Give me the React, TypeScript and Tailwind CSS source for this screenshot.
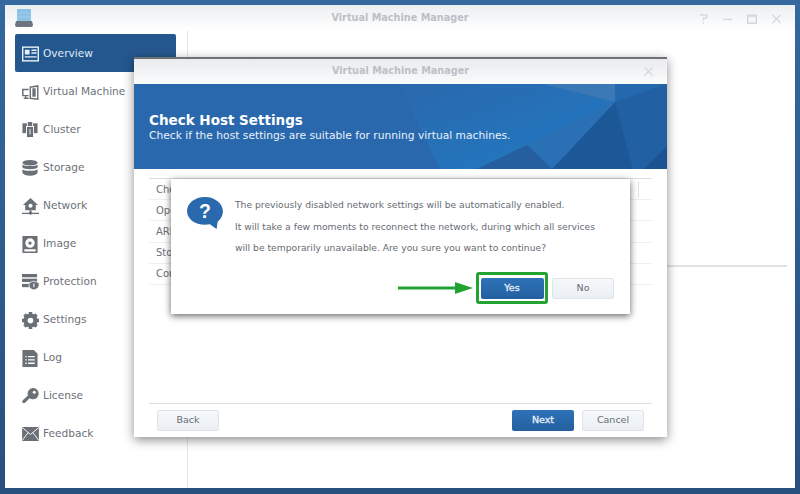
import React from "react";

const G = "#6b6f76";

const icons: Record<string, React.ReactNode> = {
  overview: (
    <svg viewBox="0 0 18 16" className="w-[17px] h-[16px]">
      <rect x="0.75" y="0.75" width="16.5" height="14.5" fill="none" stroke="#e8f0f8" strokeWidth="1.5" />
      <rect x="3" y="3.500" width="5" height="5" fill="#e8f0f8" />
      <path d="M10 4h5.500M10 7h5.500M3 11h12.500" stroke="#e8f0f8" strokeWidth="1.5" />
    </svg>
  ),
  vm: (
    <svg viewBox="0 0 18 16" className="w-[17px] h-[15px]" fill={G}>
      <path d="M0 4h7v1.600H1.600v5H7V12H4.500v1.400H7V15H1.800v-1.600h1.400V12H0z" />
      <path d="M8 1.500 17.500 0v16L8 15zM9.500 3v10.600l6.500.6V2z" />
      <rect x="11" y="3.500" width="3.500" height="9" />
    </svg>
  ),
  cluster: (
    <svg viewBox="0 0 18 18" className="w-[16px] h-[16px]" fill={G}>
      <rect x="0.5" y="1.500" width="5" height="11" />
      <rect x="12.5" y="1.500" width="5" height="11" />
      <rect x="6.5" y="0" width="5" height="6" />
      <rect x="5" y="5" width="8" height="12.500" stroke="#fff" strokeWidth="1" />
      <path d="M9 8v6" stroke="#fff" />
    </svg>
  ),
  storage: (
    <svg viewBox="0 0 16 16" className="w-[16px] h-[16px]" fill={G}>
      <ellipse cx="8" cy="2.800" rx="7.600" ry="2.800" />
      <path d="M.4 4.600C2 6.600 14 6.600 15.600 4.600v3C14 9.800 2 9.800.4 7.600zM.4 9.200c1.600 2.100 13.600 2.100 15.200 0v3.600C14 16.600 2 16.600.4 12.800z" />
    </svg>
  ),
  network: (
    <svg viewBox="0 0 18 18" className="w-[17px] h-[17px]" fill={G}>
      <path d="M9 0 17 7.500h-2.400V13H3.400V7.500H1zM9 6a2.200 2.200 0 1 0 0 4.400A2.200 2.200 0 0 0 9 6z" fillRule="evenodd" />
      <rect x="8" y="13" width="2" height="3" />
      <rect x="0" y="15.600" width="18" height="1.400" />
      <circle cx="9" cy="16" r="1.800" />
    </svg>
  ),
  image: (
    <svg viewBox="0 0 16 18" className="w-[16px] h-[17px]">
      <rect width="16" height="18" fill={G} />
      <circle cx="8" cy="7.500" r="5" fill="#fff" />
      <circle cx="8" cy="7.500" r="1.800" fill={G} />
      <rect x="2" y="14" width="12" height="2.400" fill="#fff" />
    </svg>
  ),
  protection: (
    <svg viewBox="0 0 18 17" className="w-[17px] h-[16px]" fill={G}>
      <rect x="0" y="0" width="16" height="3.500" />
      <rect x="0" y="5" width="16" height="3.500" />
      <rect x="0" y="10.500" width="8" height="3.500" />
      <path d="M12.500 7.500 18 9.200v3.400c0 2-2.500 3.600-5.500 4.400-3-.8-5-2.400-5-4.400V9.200z" stroke="#fff" strokeWidth="0.8" />
      <rect x="12" y="10" width="1.200" height="4" fill="#fff" />
    </svg>
  ),
  settings: (
    <svg viewBox="0 0 24 24" className="w-[17px] h-[17px]">
      <circle cx="12" cy="12" r="7" fill="none" stroke={G} strokeWidth="6" />
      <path d="M12 0v5M12 19v5M0 12h5M19 12h5M3.500 3.500 7 7M17 17l3.500 3.500M3.500 20.500 7 17M17 7l3.500-3.500" stroke={G} strokeWidth="5" />
    </svg>
  ),
  log: (
    <svg viewBox="0 0 16 18" className="w-[16px] h-[17px]">
      <path d="M0 0h12l4 4v14H0z" fill={G} />
      <path d="M6 7h7M6 10.500h7M6 14h7M3 7h1.500M3 10.500h1.500M3 14h1.500" stroke="#fff" strokeWidth="1.400" />
    </svg>
  ),
  license: (
    <svg viewBox="0 0 18 18" className="w-[17px] h-[17px]">
      <path d="M11.500 0A6 6 0 1 1 8 10.800L3 16H0.500v-2.800L6.300 8A6 6 0 0 1 11.500 0z" fill={G} />
      <circle cx="13" cy="4.600" r="1.600" fill="#fff" />
    </svg>
  ),
  feedback: (
    <svg viewBox="0 0 18 15" className="w-[17px] h-[14px]">
      <rect width="18" height="15" fill={G} />
      <path d="M0 0.500 9 8l9-7.500M0 14.500 6.500 6M18 14.500 11.500 6" fill="none" stroke="#fff" strokeWidth="1" />
    </svg>
  ),
};

const nav: [string, string][] = [
  ["overview", "Overview"],
  ["vm", "Virtual Machine"],
  ["cluster", "Cluster"],
  ["storage", "Storage"],
  ["network", "Network"],
  ["image", "Image"],
  ["protection", "Protection"],
  ["settings", "Settings"],
  ["log", "Log"],
  ["license", "License"],
  ["feedback", "Feedback"],
];

function GrayBtn({ children, w }: { children: React.ReactNode; w: string }) {
  return (
    <div className={`${w} h-[21px] flex items-center justify-center rounded-[2px] border border-[#e0e4e9] bg-gradient-to-b from-[#f6f8fb] to-[#ebeff3] text-[#666c73] text-[9.5px]`}>
      {children}
    </div>
  );
}

function BlueBtn({ children, w }: { children: React.ReactNode; w: string }) {
  return (
    <div className={`${w} h-[21px] flex items-center justify-center rounded-[2px] bg-gradient-to-b from-[#2e72b8] to-[#24609f] text-[#e6f0f8] text-[9.5px] [-webkit-text-stroke:0.3px_#e6f0f8]`}>
      {children}
    </div>
  );
}

export default function App() {
  return (
    <div
      className="relative w-[800px] h-[494px] overflow-hidden bg-gradient-to-b from-[#34689f] to-[#28507f] pl-[5px] pt-[5px]"
      style={{ fontFamily: '"DejaVu Sans", Verdana, sans-serif' }}
    >
      {/* main window */}
      <div className="relative flex flex-col w-[790px] h-[483px] bg-white">
        <div className="relative flex h-[26px] shrink-0 items-center justify-center bg-gradient-to-b from-[#eceef1] to-white">
          <div className="absolute left-[10px] top-[4px]">
            <svg viewBox="0 0 18 18" className="w-[18px] h-[18px]">
              <rect x="2" y="0" width="14" height="12" fill="#8cc1e6" />
              <path d="M2 4h14M2 8h14" stroke="#a9d3ee" strokeWidth="0.7" />
              <path d="M1 12h16l1 4a2 2 0 0 1-2 2H2a2 2 0 0 1-2-2z" fill="#6d7680" />
            </svg>
          </div>
          <span className="text-[9.7px] font-bold text-[#bcc0c5]">Virtual Machine Manager</span>
          <div className="absolute right-[14px] top-[8px] flex items-center gap-[15px]">
            <svg viewBox="0 0 10 11" className="w-[9px] h-[11px]"><path d="M1 1.500h7.500v3.500H5v2.500M5 9v2" fill="none" stroke="#d2d5d9" strokeWidth="1.300" /></svg>
            <svg viewBox="0 0 10 10" className="w-[9px] h-[10px]"><path d="M0 5.500h10" stroke="#d2d5d9" strokeWidth="1.400" /></svg>
            <svg viewBox="0 0 10 10" className="w-[10px] h-[10px]"><path d="M.7 2v7.300h8.600V2zM0 1.200h10" fill="none" stroke="#d2d5d9" strokeWidth="1.400" /></svg>
            <svg viewBox="0 0 10 10" className="w-[9px] h-[10px]"><path d="m.5.5 9 9M9.500.5l-9 9" stroke="#d2d5d9" strokeWidth="1.300" /></svg>
          </div>
        </div>
        <div className="flex flex-1 min-h-0">
          <div className="flex flex-col w-[183px] shrink-0 border-r border-[#e3e5e8] pt-[3px] pl-[10px] pr-[11px]">
            {nav.map(([k, label], i) => (
              <div
                key={k}
                className={`flex items-center h-[38px] shrink-0 pl-[6px] pt-[2px] rounded-[2px] text-[10.6px] ${i === 0 ? "bg-[#25578f] text-[#dfeaf4]" : "text-[#6c7178]"}`}
              >
                <span className="w-[18px] flex justify-center shrink-0">{icons[k]}</span>
                <span className="ml-[4px]">{label}</span>
              </div>
            ))}
          </div>
          <div className="flex-1 flex flex-col items-end pt-[234px] pr-[8px]">
            <div className="w-[120px] h-[2px] bg-[#e0e2e5]" />
          </div>
        </div>
      </div>

      {/* wizard dialog */}
      <div className="absolute left-[134px] top-[57px] w-[533px] h-[380px] flex flex-col bg-white border-t-2 border-[#6f7173] shadow-[0_3px_10px_rgba(0,0,0,0.45)]">
        <div className="relative h-[25px] shrink-0 flex items-center justify-center bg-gradient-to-b from-[#e9ebee] to-[#fafbfb]">
          <span className="text-[9.7px] font-bold text-[#bcc0c5]">Virtual Machine Manager</span>
          <svg viewBox="0 0 10 10" className="absolute right-[14px] top-[8px] w-[9px] h-[9px]"><path d="m.5.5 9 9M9.500.5l-9 9" stroke="#cfd3d7" strokeWidth="1.200" /></svg>
        </div>
        <div className="relative h-[85px] shrink-0 bg-[#2a68ad] overflow-hidden">
          <svg viewBox="0 0 533 85" className="absolute inset-0 w-[533px] h-[85px]">
            <defs>
              <linearGradient id="bright" x1="0.1" y1="0" x2="0.85" y2="0.75">
                <stop offset="0" stopColor="#2a69ae" />
                <stop offset="1" stopColor="#2277bf" />
              </linearGradient>
            </defs>
            <polygon points="265,0 409,0 481,18 393,61 343,85 306,85" fill="url(#bright)" />
            <polygon points="409,0 481,0 481,18" fill="#3b79b6" />
            <polygon points="481,0 533,0 481,18" fill="#2468ad" />
            <polygon points="481,18 533,0 533,85 499,85" fill="#2060a3" />
            <polygon points="481,18 499,85 418,85" fill="#1c5797" />
            <polygon points="481,18 418,85 393,61" fill="#2a70b5" />
            <polygon points="393,61 418,85 343,85" fill="#255f9f" />
            <polygon points="510,85 533,62 533,85" fill="#1b5392" />
          </svg>
          <div className="absolute left-[15px] top-[28px] text-white">
            <div className="text-[13.5px] font-bold leading-[17px]">Check Host Settings</div>
            <div className="text-[10.7px] leading-[14px] text-[#e8f2fa]">Check if the host settings are suitable for running virtual machines.</div>
          </div>
        </div>
        <div className="flex-1 px-[15px] pt-[9px] flex flex-col min-h-0">
          <div className="border-t border-[#dcdee0]">
            {["Che", "Ope", "ARP", "Sto", "Cor"].map((t, i) => (
              <div key={t} className="flex items-center h-[21.2px] pl-[7px] border-b border-[#eeeff0] text-[10px] text-[#6c7178]">
                <span>{t}</span>
                {i === 0 && <span className="ml-auto mr-[13px] w-px h-[17px] bg-[#e0e2e4]" />}
              </div>
            ))}
          </div>
          <div className="mt-auto border-t border-[#dcdee0] pt-[6px] pb-[6px] pl-[8px] pr-[8px] flex items-center">
            <GrayBtn w="w-[62px]">Back</GrayBtn>
            <div className="ml-auto flex gap-[8px]">
              <BlueBtn w="w-[62px]">Next</BlueBtn>
              <GrayBtn w="w-[62px]">Cancel</GrayBtn>
            </div>
          </div>
        </div>
      </div>

      {/* confirmation box */}
      <div className="absolute left-[171px] top-[179px] w-[459px] h-[135px] bg-white shadow-[0_2px_7px_rgba(0,0,0,0.6)] flex pl-[15px] pt-[18px]">
        <svg viewBox="0 0 38 34" className="w-[38px] h-[33px] shrink-0">
          <path d="M19 0C29 0 37.500 6.500 37.500 15c0 4.500-2.500 8-5.500 10.500L31 33l-7-4.800c-1.500.3-3.300.5-5 .5C8.500 28.700.5 22.700.5 14.500.5 6.500 8.500 0 19 0z" fill="#2a69ad" />
          <text x="19" y="22" textAnchor="middle" fontSize="20" fontWeight="700" fill="#fff" fontFamily="Liberation Sans, sans-serif">?</text>
        </svg>
        <div className="ml-[11px] flex-1 flex flex-col">
          <div className="text-[9.2px] leading-[21.5px] text-[#666b72] mt-[-3px]">
            <div>The previously disabled network settings will be automatically enabled.</div>
            <div>It will take a few moments to reconnect the network, during which all services</div>
            <div>will be temporarily unavailable. Are you sure you want to continue?</div>
          </div>
          <div className="flex items-center justify-end mt-[13.5px] pr-[16px]">
            <svg viewBox="0 0 75 12" className="w-[75px] h-[12px] mr-[3px]">
              <path d="M0 6h58" stroke="#22a332" strokeWidth="3" />
              <path d="M57 0 75 6 57 12z" fill="#22a332" />
            </svg>
            <div className="rounded-[3px] border-[3px] border-[#22a332] px-[1.5px] py-[2.5px] mr-[4px]">
              <BlueBtn w="w-[63px]">Yes</BlueBtn>
            </div>
            <GrayBtn w="w-[62px]">No</GrayBtn>
          </div>
        </div>
      </div>
    </div>
  );
}
